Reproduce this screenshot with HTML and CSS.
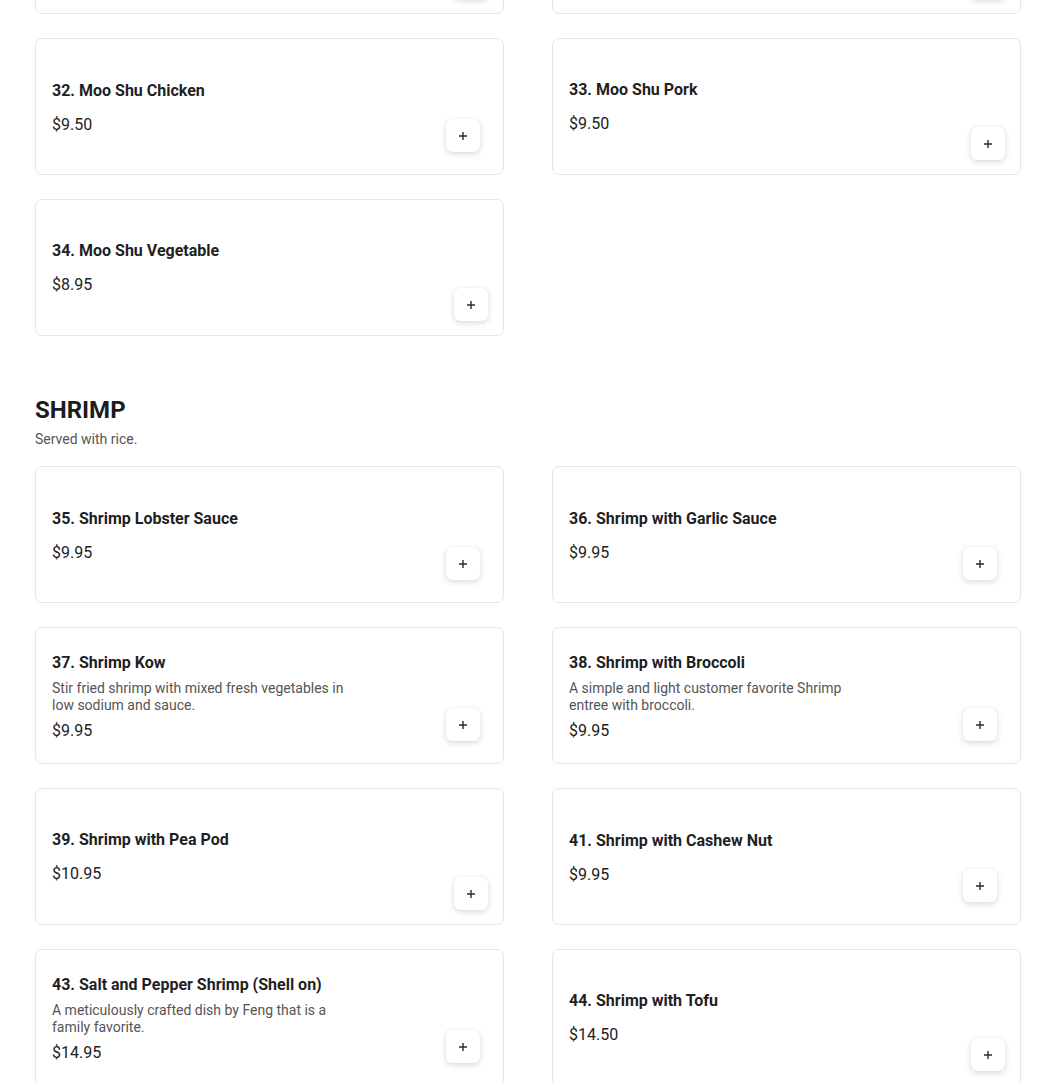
FILE: index.html
```html
<!DOCTYPE html>
<html>
<head>
<meta charset="utf-8">
<link rel="stylesheet" href="styles.css">
</head>
<body>
<main class="page">
  <section class="section first">
    <div class="grid">
      <div class="card card-end"><button class="add alt"><svg viewBox="0 0 10 10"><path d="M5 1v8M1 5h8"/></svg></button></div>
      <div class="card card-end"><button class="add alt"><svg viewBox="0 0 10 10"><path d="M5 1v8M1 5h8"/></svg></button></div>
      <div class="card"><div class="info plain"><div class="title">32. Moo Shu Chicken</div><div class="price">$9.50</div></div><button class="add"><svg viewBox="0 0 10 10"><path d="M5 1v8M1 5h8"/></svg></button></div>
      <div class="card"><div class="info plain up"><div class="title">33. Moo Shu Pork</div><div class="price">$9.50</div></div><button class="add alt"><svg viewBox="0 0 10 10"><path d="M5 1v8M1 5h8"/></svg></button></div>
      <div class="card"><div class="info plain up"><div class="title">34. Moo Shu Vegetable</div><div class="price">$8.95</div></div><button class="add alt"><svg viewBox="0 0 10 10"><path d="M5 1v8M1 5h8"/></svg></button></div>
    </div>
  </section>

  <section class="section">
    <h2 class="sec-title">SHRIMP</h2>
    <p class="sec-sub">Served with rice.</p>
    <div class="grid">
      <div class="card"><div class="info plain"><div class="title">35. Shrimp Lobster Sauce</div><div class="price">$9.95</div></div><button class="add"><svg viewBox="0 0 10 10"><path d="M5 1v8M1 5h8"/></svg></button></div>
      <div class="card"><div class="info plain"><div class="title">36. Shrimp with Garlic Sauce</div><div class="price">$9.95</div></div><button class="add"><svg viewBox="0 0 10 10"><path d="M5 1v8M1 5h8"/></svg></button></div>
      <div class="card"><div class="info"><div class="title">37. Shrimp Kow</div><div class="desc">Stir fried shrimp with mixed fresh vegetables in low sodium and sauce.</div><div class="price">$9.95</div></div><button class="add"><svg viewBox="0 0 10 10"><path d="M5 1v8M1 5h8"/></svg></button></div>
      <div class="card"><div class="info"><div class="title">38. Shrimp with Broccoli</div><div class="desc">A simple and light customer favorite Shrimp entree with broccoli.</div><div class="price">$9.95</div></div><button class="add"><svg viewBox="0 0 10 10"><path d="M5 1v8M1 5h8"/></svg></button></div>
      <div class="card"><div class="info plain up"><div class="title">39. Shrimp with Pea Pod</div><div class="price">$10.95</div></div><button class="add alt"><svg viewBox="0 0 10 10"><path d="M5 1v8M1 5h8"/></svg></button></div>
      <div class="card"><div class="info plain"><div class="title">41. Shrimp with Cashew Nut</div><div class="price">$9.95</div></div><button class="add"><svg viewBox="0 0 10 10"><path d="M5 1v8M1 5h8"/></svg></button></div>
      <div class="card"><div class="info"><div class="title">43. Salt and Pepper Shrimp (Shell on)</div><div class="desc">A meticulously crafted dish by Feng that is a family favorite.</div><div class="price">$14.95</div></div><button class="add"><svg viewBox="0 0 10 10"><path d="M5 1v8M1 5h8"/></svg></button></div>
      <div class="card"><div class="info plain up"><div class="title">44. Shrimp with Tofu</div><div class="price">$14.50</div></div><button class="add alt"><svg viewBox="0 0 10 10"><path d="M5 1v8M1 5h8"/></svg></button></div>
    </div>
  </section>
</main>
</body>
</html>
```

FILE: styles.css
```css
* { box-sizing: border-box; }
html, body { margin: 0; padding: 0; background: #fff; }
body {
  font-family: Roboto, "Liberation Sans", Arial, sans-serif;
  color: #1f1f1f;
  overflow: hidden;
}
.page {
  padding: 0 29px 0 35px;
  margin-top: -123px;
}
.section { margin-bottom: 60px; }
.sec-title {
  margin: 2px 0 0;
  font-size: 24px;
  line-height: 28px;
  font-weight: 700;
  color: #1c1c1c;
}
.sec-sub {
  margin: 7px 0 18px;
  font-size: 14px;
  line-height: 17px;
  color: #555;
}
.grid {
  display: grid;
  grid-template-columns: 1fr 1fr;
  column-gap: 48px;
  row-gap: 24px;
}
.card {
  height: 137px;
  border: 1px solid #e6e6e6;
  border-radius: 7px;
  background: #fff;
  display: flex;
  align-items: center;
  justify-content: space-between;
  padding: 0 15px 14px 16px;
}
.card-end { justify-content: flex-end; }
.info {
  display: flex;
  flex-direction: column;
  gap: 7px;
  margin-top: 16px;
}
.info.plain { gap: 14px; }
.info.up { margin-top: 14px; }
.title {
  font-size: 16px;
  line-height: 20px;
  font-weight: 700;
  color: #1f1f1f;
}
.desc {
  font-size: 14px;
  line-height: 17px;
  color: #555;
  max-width: 300px;
}
.price {
  font-size: 16px;
  line-height: 20px;
  color: #222;
}
.add {
  align-self: flex-end;
  flex: none;
  width: 34px;
  height: 33px;
  margin: 0 8px 8px 0;
  padding: 0;
  border: none;
  border-radius: 6px;
  background: #fff;
  box-shadow: 0 2px 6px rgba(0,0,0,0.14), 0 0 1px rgba(0,0,0,0.12);
  display: flex;
  align-items: center;
  justify-content: center;
}
.add.alt { margin: 0; }
.add svg {
  width: 10px;
  height: 10px;
  fill: none;
  stroke: #2a2a2a;
  stroke-width: 1.4;
}
```
